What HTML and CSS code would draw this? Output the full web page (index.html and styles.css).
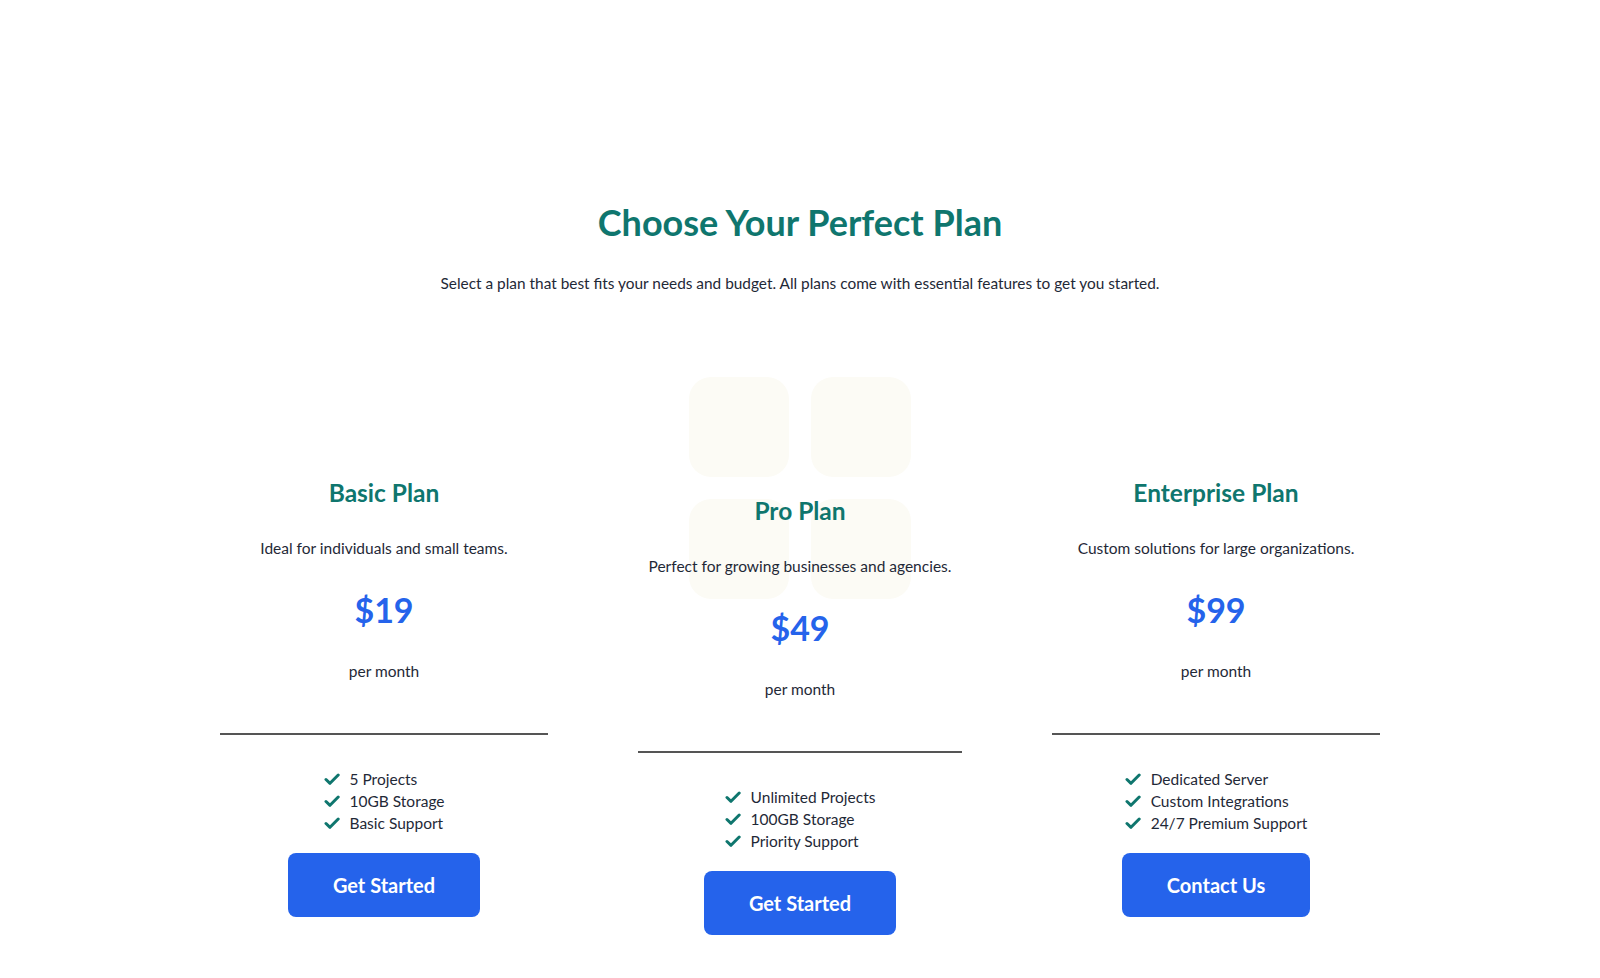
FILE: index.html
```html
<!DOCTYPE html>
<html lang="en">
<head>
<meta charset="utf-8">
<title>Choose Your Perfect Plan</title>
<link rel="stylesheet" href="styles.css">
</head>
<body>
<section class="pricing">
  <h1 class="pricing-title">Choose Your Perfect Plan</h1>
  <p class="pricing-sub">Select a plan that best fits your needs and budget. All plans come with essential features to get you started.</p>

  <div class="plans">
    <div class="plan">
      <h2 class="plan-name">Basic Plan</h2>
      <p class="plan-desc">Ideal for individuals and small teams.</p>
      <div class="plan-price">$19</div>
      <p class="plan-period">per month</p>
      <div class="plan-rule"></div>
      <ul class="plan-features">
        <li><svg class="check" viewBox="0 0 16 16"><polyline points="2,8.5 6,12.3 14.2,4"/></svg>5 Projects</li>
        <li><svg class="check" viewBox="0 0 16 16"><polyline points="2,8.5 6,12.3 14.2,4"/></svg>10GB Storage</li>
        <li><svg class="check" viewBox="0 0 16 16"><polyline points="2,8.5 6,12.3 14.2,4"/></svg>Basic Support</li>
      </ul>
      <a class="plan-btn" href="#">Get Started</a>
    </div>

    <div class="plan plan-pro">
      <div class="pro-deco" aria-hidden="true"><span></span><span></span><span></span><span></span></div>
      <h2 class="plan-name">Pro Plan</h2>
      <p class="plan-desc">Perfect for growing businesses and agencies.</p>
      <div class="plan-price">$49</div>
      <p class="plan-period">per month</p>
      <div class="plan-rule"></div>
      <ul class="plan-features">
        <li><svg class="check" viewBox="0 0 16 16"><polyline points="2,8.5 6,12.3 14.2,4"/></svg>Unlimited Projects</li>
        <li><svg class="check" viewBox="0 0 16 16"><polyline points="2,8.5 6,12.3 14.2,4"/></svg>100GB Storage</li>
        <li><svg class="check" viewBox="0 0 16 16"><polyline points="2,8.5 6,12.3 14.2,4"/></svg>Priority Support</li>
      </ul>
      <a class="plan-btn" href="#">Get Started</a>
    </div>

    <div class="plan">
      <h2 class="plan-name">Enterprise Plan</h2>
      <p class="plan-desc">Custom solutions for large organizations.</p>
      <div class="plan-price">$99</div>
      <p class="plan-period">per month</p>
      <div class="plan-rule"></div>
      <ul class="plan-features">
        <li><svg class="check" viewBox="0 0 16 16"><polyline points="2,8.5 6,12.3 14.2,4"/></svg>Dedicated Server</li>
        <li><svg class="check" viewBox="0 0 16 16"><polyline points="2,8.5 6,12.3 14.2,4"/></svg>Custom Integrations</li>
        <li><svg class="check" viewBox="0 0 16 16"><polyline points="2,8.5 6,12.3 14.2,4"/></svg>24/7 Premium Support</li>
      </ul>
      <a class="plan-btn" href="#">Contact Us</a>
    </div>
  </div>
</section>
</body>
</html>
```

FILE: styles.css
```css
* { box-sizing: border-box; }

html, body {
  margin: 0;
  padding: 0;
  background: #ffffff;
}

body {
  font-family: "Lato", "Noto Sans", "DejaVu Sans", sans-serif;
  color: #1f2937;
}

.pricing {
  width: 1200px;
  margin: 0 auto;
  padding-top: 200px;
  text-align: center;
}

.pricing-title {
  margin: 0;
  font-size: 36px;
  line-height: 44px;
  font-weight: 700;
  color: #0f766e;
}

.pricing-sub {
  margin: 27px 0 0;
  font-size: 15.4px;
  line-height: 24px;
  color: #1f2937;
}

.plans {
  display: grid;
  grid-template-columns: repeat(3, 368px);
  column-gap: 48px;
  align-items: start;
  margin-top: 150px;
}

.plan {
  position: relative;
  display: flex;
  flex-direction: column;
  align-items: center;
  padding: 32px 20px 0;
}

.plan > *:not(.pro-deco) {
  position: relative;
  z-index: 1;
}

.plan-pro {
  margin-top: 18px;
  padding-left: 22px;
  padding-right: 22px;
}

.pro-deco {
  position: absolute;
  z-index: 0;
  top: -86px;
  left: 50%;
  transform: translateX(-50%);
  display: grid;
  grid-template-columns: 100px 100px;
  grid-auto-rows: 100px;
  gap: 22px;
}

.pro-deco span {
  display: block;
  background: #fcfbf5;
  border-radius: 22px;
}

.plan-name {
  margin: 0;
  font-size: 24.5px;
  line-height: 32px;
  font-weight: 700;
  color: #0f766e;
}

.plan-desc {
  margin: 27px 0 0;
  font-size: 15.5px;
  line-height: 24px;
  color: #1f2937;
}

.plan-price {
  margin-top: 28px;
  font-size: 34px;
  line-height: 44px;
  font-weight: 700;
  color: #2563eb;
}

.plan-period {
  margin: 27px 0 0;
  font-size: 15.5px;
  line-height: 24px;
  color: #1f2937;
}

.plan-rule {
  align-self: stretch;
  height: 2px;
  margin-top: 50px;
  background: #555555;
}

.plan-features {
  list-style: none;
  margin: 33px 0 0;
  padding: 0;
  text-align: left;
}

.plan-features li {
  display: flex;
  align-items: center;
  font-size: 15.5px;
  line-height: 22px;
  color: #1f2937;
}

.check {
  width: 16px;
  height: 16px;
  margin-right: 10px;
  flex: none;
  fill: none;
  stroke: #0f766e;
  stroke-width: 3;
  stroke-linecap: round;
  stroke-linejoin: round;
}

.plan-btn {
  display: inline-block;
  margin-top: 19px;
  padding: 16px 45px;
  font-size: 20px;
  line-height: 32px;
  font-weight: 700;
  color: #ffffff;
  background: #2563eb;
  border-radius: 8px;
  text-decoration: none;
}
```
